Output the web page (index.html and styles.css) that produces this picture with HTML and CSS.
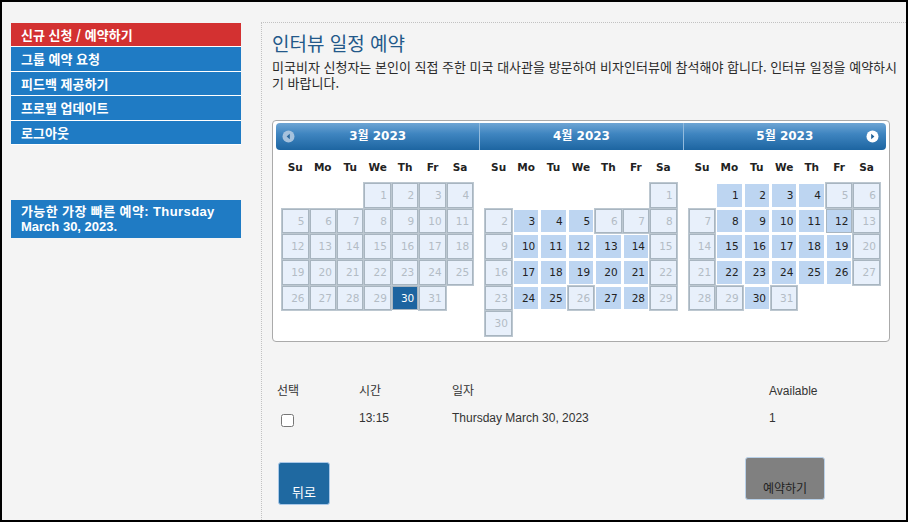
FILE: index.html
```html
<!DOCTYPE html>
<html lang="ko">
<head>
<meta charset="utf-8">
<title>인터뷰 일정 예약</title>
<link rel="stylesheet" href="styles.css">
</head>
<body>
<div class="frame">
  <aside class="sidebar">
    <nav class="menu">
      <a class="active" href="#">신규 신청 / 예약하기</a>
      <a href="#">그룹 예약 요청</a>
      <a href="#">피드백 제공하기</a>
      <a href="#">프로필 업데이트</a>
      <a href="#">로그아웃</a>
    </nav>
    <div class="earliest"><span class="line1">가능한 가장 빠른 예약: Thursday</span><span class="line2">March 30, 2023.</span></div>
  </aside>
  <main class="main">
    <h1 class="title">인터뷰 일정 예약</h1>
    <p class="intro">미국비자 신청자는 본인이 직접 주한 미국 대사관을 방문하여 비자인터뷰에 참석해야 합니다. 인터뷰 일정을 예약하시기 바랍니다.</p>

    <div class="cal">
      <div class="group">
        <div class="ghead">
          <svg class="nav-prev" width="13" height="13" viewBox="0 0 13 13"><circle cx="6.5" cy="6.5" r="6" fill="#a6c2dd"/><path d="M7.8 3.8 L4.6 6.5 L7.8 9.2 Z" fill="#2c6aa0"/></svg>
          3월 2023
        </div>
        <table>
          <thead><tr><th>Su</th><th>Mo</th><th>Tu</th><th>We</th><th>Th</th><th>Fr</th><th>Sa</th></tr></thead>
          <tbody>
            <tr><td></td><td></td><td></td><td><span class="d">1</span></td><td><span class="d">2</span></td><td><span class="d">3</span></td><td><span class="d">4</span></td></tr>
            <tr><td><span class="d">5</span></td><td><span class="d">6</span></td><td><span class="d">7</span></td><td><span class="d">8</span></td><td><span class="d">9</span></td><td><span class="d">10</span></td><td><span class="d">11</span></td></tr>
            <tr><td><span class="d">12</span></td><td><span class="d">13</span></td><td><span class="d">14</span></td><td><span class="d">15</span></td><td><span class="d">16</span></td><td><span class="d">17</span></td><td><span class="d">18</span></td></tr>
            <tr><td><span class="d">19</span></td><td><span class="d">20</span></td><td><span class="d">21</span></td><td><span class="d">22</span></td><td><span class="d">23</span></td><td><span class="d">24</span></td><td><span class="d">25</span></td></tr>
            <tr><td><span class="d">26</span></td><td><span class="d">27</span></td><td><span class="d">28</span></td><td><span class="d">29</span></td><td><span class="s">30</span></td><td><span class="d">31</span></td><td></td></tr>
          </tbody>
        </table>
      </div>
      <div class="group">
        <div class="ghead">4월 2023</div>
        <table>
          <thead><tr><th>Su</th><th>Mo</th><th>Tu</th><th>We</th><th>Th</th><th>Fr</th><th>Sa</th></tr></thead>
          <tbody>
            <tr><td></td><td></td><td></td><td></td><td></td><td></td><td><span class="d">1</span></td></tr>
            <tr><td><span class="d">2</span></td><td><span class="a">3</span></td><td><span class="a">4</span></td><td><span class="a">5</span></td><td><span class="d">6</span></td><td><span class="d">7</span></td><td><span class="d">8</span></td></tr>
            <tr><td><span class="d">9</span></td><td><span class="a">10</span></td><td><span class="a">11</span></td><td><span class="a">12</span></td><td><span class="a">13</span></td><td><span class="a">14</span></td><td><span class="d">15</span></td></tr>
            <tr><td><span class="d">16</span></td><td><span class="a">17</span></td><td><span class="a">18</span></td><td><span class="a">19</span></td><td><span class="a">20</span></td><td><span class="a">21</span></td><td><span class="d">22</span></td></tr>
            <tr><td><span class="d">23</span></td><td><span class="a">24</span></td><td><span class="a">25</span></td><td><span class="d">26</span></td><td><span class="a">27</span></td><td><span class="a">28</span></td><td><span class="d">29</span></td></tr>
            <tr><td><span class="d">30</span></td><td></td><td></td><td></td><td></td><td></td><td></td></tr>
          </tbody>
        </table>
      </div>
      <div class="group">
        <div class="ghead">
          5월 2023
          <svg class="nav-next" width="13" height="13" viewBox="0 0 13 13"><circle cx="6.5" cy="6.5" r="6" fill="#ffffff"/><path d="M5.2 3.8 L8.4 6.5 L5.2 9.2 Z" fill="#1d5f96"/></svg>
        </div>
        <table>
          <thead><tr><th>Su</th><th>Mo</th><th>Tu</th><th>We</th><th>Th</th><th>Fr</th><th>Sa</th></tr></thead>
          <tbody>
            <tr><td></td><td><span class="a">1</span></td><td><span class="a">2</span></td><td><span class="a">3</span></td><td><span class="a">4</span></td><td><span class="d">5</span></td><td><span class="d">6</span></td></tr>
            <tr><td><span class="d">7</span></td><td><span class="a">8</span></td><td><span class="a">9</span></td><td><span class="a">10</span></td><td><span class="a">11</span></td><td><span class="a hl">12</span></td><td><span class="d">13</span></td></tr>
            <tr><td><span class="d">14</span></td><td><span class="a">15</span></td><td><span class="a">16</span></td><td><span class="a">17</span></td><td><span class="a">18</span></td><td><span class="a">19</span></td><td><span class="d">20</span></td></tr>
            <tr><td><span class="d">21</span></td><td><span class="a">22</span></td><td><span class="a">23</span></td><td><span class="a">24</span></td><td><span class="a">25</span></td><td><span class="a">26</span></td><td><span class="d">27</span></td></tr>
            <tr><td><span class="d">28</span></td><td><span class="d">29</span></td><td><span class="a">30</span></td><td><span class="d">31</span></td><td></td><td></td><td></td></tr>
          </tbody>
        </table>
      </div>
    </div>

    <div class="slots">
      <div class="slot-h">선택</div>
      <div class="slot-h">시간</div>
      <div class="slot-h">일자</div>
      <div class="slot-h">Available</div>
      <div class="slot-c"><input type="checkbox" class="check"></div>
      <div class="slot-c">13:15</div>
      <div class="slot-c">Thursday March 30, 2023</div>
      <div class="slot-c">1</div>
    </div>

    <div class="actions">
      <button class="btn btn-back" type="button">뒤로</button>
      <button class="btn btn-book" type="button">예약하기</button>
    </div>
  </main>
</div>
</body>
</html>
```

FILE: styles.css
```css
* {
  box-sizing: border-box;
}

body {
  margin: 0;
  background: #000;
}

.frame {
  width: 908px;
  height: 522px;
  border: 2px solid #000;
  background: #f4f4f4;
  display: flex;
  align-items: flex-start;
  overflow: hidden;
  font-family: "Liberation Sans", "Noto Sans CJK KR", sans-serif;
  color: #333;
}

/* sidebar */
.sidebar {
  flex: none;
  width: 230px;
  margin: 21px 0 0 9px;
}

.menu a {
  display: block;
  height: 24.4px;
  line-height: 23px;
  padding-left: 10px;
  background: #1f7bc4;
  border-bottom: 1px solid #fff;
  color: #fff;
  font-family: "Noto Sans CJK KR", sans-serif;
  font-weight: bold;
  font-size: 13px;
  text-decoration: none;
  white-space: nowrap;
}

.menu a.active {
  background: #d33131;
}

.earliest {
  margin-top: 55px;
  height: 38px;
  background: #1f7bc4;
  color: #fff;
  font-family: "Liberation Sans", "Noto Sans CJK KR", sans-serif;
  font-weight: bold;
  font-size: 13px;
  line-height: 15px;
  padding: 4px 10px;
}

.earliest .line1,
.earliest .line2 {
  display: block;
  height: 15px;
  white-space: nowrap;
}

.earliest .line1 {
  letter-spacing: 0.4px;
}

/* main panel */
.main {
  flex: 1;
  align-self: stretch;
  margin: 20px 0 0 20px;
  border-top: 1px dotted #c2c2c2;
  border-left: 1px dotted #c2c2c2;
  padding: 8px 8px 0 10px;
}

.title {
  margin: 0;
  font-family: "Noto Sans CJK KR", sans-serif;
  font-weight: 400;
  font-size: 19px;
  line-height: 24px;
  color: #23598a;
}

.intro {
  margin: 4px 0 0;
  max-width: 628px;
  font-family: "Noto Sans CJK KR", sans-serif;
  font-size: 13px;
  line-height: 16px;
  color: #2a2a2a;
}

/* calendar */
.cal {
  margin-top: 29px;
  width: 618px;
  border: 1px solid #aaa;
  border-radius: 4px;
  background: #fff;
  padding: 2px 3px 0;
  display: flex;
  align-items: flex-start;
}

.group {
  width: 33.3333%;
}

.ghead {
  position: relative;
  height: 27px;
  line-height: 27px;
  text-align: center;
  color: #fff;
  font-family: "DejaVu Sans", "Noto Sans CJK KR", sans-serif;
  font-weight: bold;
  font-size: 12px;
  background: linear-gradient(to bottom, #6ea5d4 0%, #3f85c0 40%, #1d65a1 100%);
}

.group:first-child .ghead {
  border-radius: 4px 0 0 4px;
}

.group:last-child .ghead {
  border-radius: 0 4px 4px 0;
}

.group + .group .ghead {
  border-left: 1px solid #93bbdd;
}

.nav-prev,
.nav-next {
  position: absolute;
  top: 7px;
}

.nav-prev {
  left: 6px;
}

.nav-next {
  right: 7px;
}

.group table {
  width: 95%;
  margin: 0 auto 4px;
  border-collapse: separate;
  border-spacing: 1px;
  font-family: "DejaVu Sans", sans-serif;
  font-size: 10.5px;
}

.group th {
  height: 31px;
  padding: 0;
  text-align: center;
  font-weight: bold;
  color: #222;
}

.group td {
  padding: 0;
}

.group td span {
  display: block;
  height: 24.7px;
  line-height: 22.7px;
  border: 1px solid transparent;
  text-align: right;
  padding-right: 3px;
}

.group td span.d {
  background: #e8f0fb;
  border-color: #a8b5c0;
  box-shadow: 0 0 0 1px #bcc7d0;
  color: #b3bcc5;
}

.group td span.a {
  background: #bdd5f1;
  border-color: #fff;
  color: #222;
}

.group td span.a.hl {
  border-color: #a8b5c0;
}

.group td span.s {
  background: #1d64a0;
  border-color: #a8b5c0;
  color: #fff;
}

/* slot table */
.slots {
  margin-top: 40px;
  padding-left: 5px;
  display: grid;
  grid-template-columns: 82px 93px 317px auto;
  row-gap: 8px;
  font-family: "Liberation Sans", "Noto Sans CJK KR", sans-serif;
  font-size: 12px;
  color: #333;
}

.slot-h {
  line-height: 18px;
}

.slot-c {
  line-height: 20px;
  height: 20px;
}

.check {
  display: block;
  width: 13px;
  height: 13px;
  margin: 6px 0 0 4px;
}

/* actions */
.actions {
  margin-top: 29px;
  padding-left: 6px;
  display: flex;
  align-items: flex-start;
}

.btn {
  height: 43px;
  border-radius: 3px;
  display: flex;
  align-items: flex-end;
  justify-content: center;
  padding: 0 0 4px;
  font-family: "Noto Sans CJK KR", sans-serif;
  line-height: 16px;
}

.btn-back {
  width: 52px;
  margin-top: 5px;
  background: #1f69a1;
  border: 1px solid #a9c8e8;
  color: #fff;
  font-size: 13px;
}

.btn-book {
  width: 80px;
  margin-left: auto;
  margin-right: 73px;
  background: #808080;
  border: 1px solid #b8d0e8;
  color: #222;
  font-size: 12px;
  padding-bottom: 3px;
}
```
